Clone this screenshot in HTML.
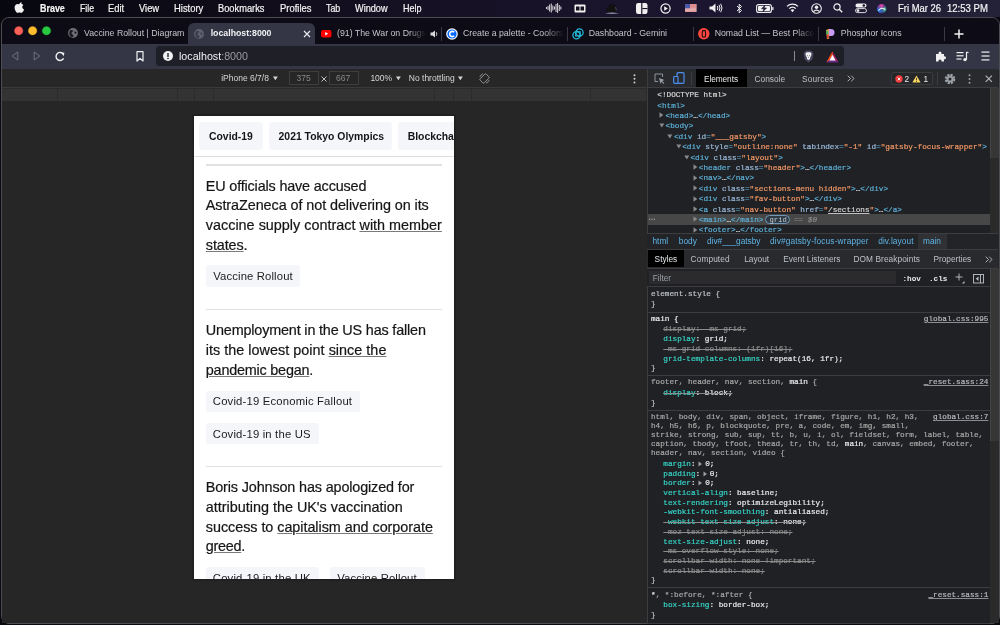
<!DOCTYPE html>
<html><head><meta charset="utf-8">
<style>
*{box-sizing:border-box;margin:0;padding:0}
html,body{width:1000px;height:625px;overflow:hidden;background:#0a0810;font-family:"Liberation Sans",sans-serif;position:relative}
.a{position:absolute;white-space:nowrap}
.mo{-webkit-text-stroke:0.2px currentColor}
svg.a{overflow:visible}
</style></head><body>
<div id="root" style="position:absolute;left:0;top:0;width:1000px;height:625px;will-change:transform">
<div class="a" style="left:0px;top:0px;width:1000px;height:625px;background:#0b0910;"></div>
<div class="a" style="left:0px;top:0px;width:1000px;height:17px;background:linear-gradient(90deg,#07070f 0%,#0f0c18 22%,#171125 45%,#1b1530 70%,#232238 100%);"></div>
<svg class="a" style="left:15px;top:1.8px;" width="11" height="12" viewBox="0 0 11 12"><g transform="scale(0.88 0.92)"><path d="M7.6 0.3c.1 1-.3 1.9-.9 2.5-.6.6-1.4 1-2.2.9-.1-.9.3-1.8.9-2.4C6 .7 6.9.3 7.6.3zM10.3 8.4c-.3.7-.5 1-.9 1.6-.6.8-1.3 1.8-2.2 1.8-.8 0-1-.5-2.1-.5s-1.3.5-2.1.5C2.1 11.8 1.4 10.9.8 10 -.8 7.6-.9 4.8.6 3.3c.6-.7 1.5-1.1 2.3-1.1.9 0 1.4.5 2.2.5.7 0 1.1-.5 2.2-.5.8 0 1.6.4 2.2 1.1-1.9 1-1.6 3.8.8 5.1z" fill="#f2f2f2"/></g></svg>
<div class="a" style="left:40.00px;top:4.00px;font-size:10.4px;line-height:10.4px;color:#f4f4f4;font-weight:bold;font-family:'Liberation Sans',sans-serif;transform:scaleX(0.859);transform-origin:0 0;-webkit-text-stroke:0.2px #f4f4f4">Brave</div>
<div class="a" style="left:79.50px;top:4.00px;font-size:10.4px;line-height:10.4px;color:#f4f4f4;font-weight:normal;font-family:'Liberation Sans',sans-serif;transform:scaleX(0.840);transform-origin:0 0;-webkit-text-stroke:0.2px #f4f4f4">File</div>
<div class="a" style="left:108.30px;top:4.00px;font-size:10.4px;line-height:10.4px;color:#f4f4f4;font-weight:normal;font-family:'Liberation Sans',sans-serif;transform:scaleX(0.902);transform-origin:0 0;-webkit-text-stroke:0.2px #f4f4f4">Edit</div>
<div class="a" style="left:138.80px;top:4.00px;font-size:10.4px;line-height:10.4px;color:#f4f4f4;font-weight:normal;font-family:'Liberation Sans',sans-serif;transform:scaleX(0.898);transform-origin:0 0;-webkit-text-stroke:0.2px #f4f4f4">View</div>
<div class="a" style="left:173.80px;top:4.00px;font-size:10.4px;line-height:10.4px;color:#f4f4f4;font-weight:normal;font-family:'Liberation Sans',sans-serif;transform:scaleX(0.905);transform-origin:0 0;-webkit-text-stroke:0.2px #f4f4f4">History</div>
<div class="a" style="left:218.30px;top:4.00px;font-size:10.4px;line-height:10.4px;color:#f4f4f4;font-weight:normal;font-family:'Liberation Sans',sans-serif;transform:scaleX(0.893);transform-origin:0 0;-webkit-text-stroke:0.2px #f4f4f4">Bookmarks</div>
<div class="a" style="left:279.50px;top:4.00px;font-size:10.4px;line-height:10.4px;color:#f4f4f4;font-weight:normal;font-family:'Liberation Sans',sans-serif;transform:scaleX(0.907);transform-origin:0 0;-webkit-text-stroke:0.2px #f4f4f4">Profiles</div>
<div class="a" style="left:325.50px;top:4.00px;font-size:10.4px;line-height:10.4px;color:#f4f4f4;font-weight:normal;font-family:'Liberation Sans',sans-serif;transform:scaleX(0.854);transform-origin:0 0;-webkit-text-stroke:0.2px #f4f4f4">Tab</div>
<div class="a" style="left:354.50px;top:4.00px;font-size:10.4px;line-height:10.4px;color:#f4f4f4;font-weight:normal;font-family:'Liberation Sans',sans-serif;transform:scaleX(0.881);transform-origin:0 0;-webkit-text-stroke:0.2px #f4f4f4">Window</div>
<div class="a" style="left:402.50px;top:4.00px;font-size:10.4px;line-height:10.4px;color:#f4f4f4;font-weight:normal;font-family:'Liberation Sans',sans-serif;transform:scaleX(0.868);transform-origin:0 0;-webkit-text-stroke:0.2px #f4f4f4">Help</div>
<div class="a" style="left:898.00px;top:4.00px;font-size:10.4px;line-height:10.4px;color:#f4f4f4;font-weight:normal;font-family:'Liberation Sans',sans-serif;transform:scaleX(0.909);transform-origin:0 0;-webkit-text-stroke:0.2px #f4f4f4">Fri Mar 26</div>
<div class="a" style="left:946.80px;top:4.00px;font-size:10.4px;line-height:10.4px;color:#f4f4f4;font-weight:normal;font-family:'Liberation Sans',sans-serif;transform:scaleX(0.919);transform-origin:0 0;-webkit-text-stroke:0.2px #f4f4f4">12:53 PM</div>
<svg class="a" style="left:546px;top:3px;" width="16" height="10" viewBox="0 0 16 10"><rect x="0.0" y="4.0" width="0.9" height="2" fill="#f0f0f0"/><rect x="1.6" y="3.0" width="0.9" height="4" fill="#f0f0f0"/><rect x="3.2" y="1.5" width="0.9" height="7" fill="#f0f0f0"/><rect x="4.8" y="0.5" width="0.9" height="9" fill="#f0f0f0"/><rect x="6.4" y="2.5" width="0.9" height="5" fill="#f0f0f0"/><rect x="8.0" y="3.5" width="0.9" height="3" fill="#f0f0f0"/><rect x="9.6" y="1.0" width="0.9" height="8" fill="#f0f0f0"/><rect x="11.2" y="0.0" width="0.9" height="10" fill="#f0f0f0"/><rect x="12.8" y="2.0" width="0.9" height="6" fill="#f0f0f0"/><rect x="14.4" y="3.5" width="0.9" height="3" fill="#f0f0f0"/></svg>
<svg class="a" style="left:574px;top:4px;" width="12" height="9" viewBox="0 0 12 9"><rect x="0.5" y="0.5" width="11" height="8" rx="1" fill="#f0f0f0"/><rect x="2" y="2.5" width="3.5" height="4" fill="#15101f"/><rect x="6.5" y="2.5" width="3.5" height="4" fill="#15101f"/></svg>
<svg class="a" style="left:604px;top:3px;" width="16" height="12" viewBox="0 0 16 12"><path d="M2.5 9.3 Q2.5 1 8 1 Q12.3 1 12.8 9.3z" fill="#121212"/><path d="M1 10.3 Q8 8.6 15 10.3 Q8 11.6 1 10.3z" fill="#8d8aa3"/><path d="M11.5 4 Q12.2 6 12.3 7.5" stroke="#6f6b85" stroke-width="0.6" fill="none"/></svg>
<svg class="a" style="left:636px;top:3px;" width="12" height="11" viewBox="0 0 12 11"><rect x="0" y="0" width="11.5" height="11" rx="2.2" fill="#f0f0f0"/><rect x="5.2" y="0" width="1.2" height="11" fill="#171125"/><rect x="6.4" y="5" width="5.1" height="1.1" fill="#171125"/></svg>
<svg class="a" style="left:660px;top:3px;" width="11" height="11" viewBox="0 0 11 11"><circle cx="5.5" cy="5.5" r="4.6" fill="none" stroke="#f0f0f0" stroke-width="1.2"/><path d="M4.2 3.3 L7.9 5.5 L4.2 7.7z" fill="#f0f0f0"/></svg>
<svg class="a" style="left:684.5px;top:4px;" width="11.5" height="8" viewBox="0 0 11.5 8"><rect width="11.5" height="8" fill="#e8e8ec"/><rect y="0.00" width="11.5" height="0.58" fill="#d94a4a"/><rect y="1.15" width="11.5" height="0.58" fill="#d94a4a"/><rect y="2.30" width="11.5" height="0.58" fill="#d94a4a"/><rect y="3.45" width="11.5" height="0.58" fill="#d94a4a"/><rect y="4.60" width="11.5" height="0.58" fill="#d94a4a"/><rect y="5.75" width="11.5" height="0.58" fill="#d94a4a"/><rect y="6.90" width="11.5" height="0.58" fill="#d94a4a"/><rect width="5" height="4.3" fill="#4a5aa8"/></svg>
<svg class="a" style="left:709px;top:3px;" width="14" height="10" viewBox="0 0 14 10"><path d="M0.5 3.5 H3 L6.5 0.5 V9.5 L3 6.5 H0.5z" fill="#f0f0f0"/><path d="M8.3 3 Q9.5 5 8.3 7" stroke="#f0f0f0" stroke-width="1" fill="none"/><path d="M10 1.8 Q12 5 10 8.2" stroke="#f0f0f0" stroke-width="1" fill="none"/><path d="M11.7 0.8 Q14.3 5 11.7 9.2" stroke="#f0f0f0" stroke-width="1" fill="none"/></svg>
<svg class="a" style="left:736px;top:3px;" width="7" height="11" viewBox="0 0 7 11"><path d="M1 3 L5.5 7.5 L3.2 9.8 V1.2 L5.5 3.5 L1 8" stroke="#f0f0f0" stroke-width="1" fill="none"/></svg>
<svg class="a" style="left:756px;top:4px;" width="18" height="9" viewBox="0 0 18 9"><rect x="0.6" y="0.6" width="14.8" height="7.8" rx="2" fill="none" stroke="#f0f0f0" stroke-width="1.1"/><rect x="2" y="2" width="12" height="5" rx="0.8" fill="#f0f0f0"/><rect x="16.2" y="3" width="1.3" height="3" rx="0.5" fill="#f0f0f0"/><path d="M9 1.2 L5.5 4.8 H8 L6.8 7.8 L10.5 4 H8z" fill="#1b1630" stroke="#1b1630" stroke-width="0.6"/></svg>
<svg class="a" style="left:786px;top:3px;" width="13" height="10" viewBox="0 0 13 10"><path d="M6.5 9.3 L4.6 7.1 A2.8 2.8 0 0 1 8.4 7.1z" fill="#f0f0f0"/><path d="M3.2 5.6 A4.7 4.7 0 0 1 9.8 5.6" stroke="#f0f0f0" stroke-width="1.3" fill="none"/><path d="M1 3.4 A7.8 7.8 0 0 1 12 3.4" stroke="#f0f0f0" stroke-width="1.3" fill="none"/></svg>
<svg class="a" style="left:810.5px;top:2.5px;" width="11" height="11" viewBox="0 0 11 11"><circle cx="5.5" cy="5.5" r="4.8" fill="none" stroke="#f0f0f0" stroke-width="1.1"/><circle cx="5.5" cy="4.3" r="1.7" fill="#f0f0f0"/><path d="M2.5 8.5 Q5.5 5.8 8.5 8.5" stroke="#f0f0f0" stroke-width="1.3" fill="none"/></svg>
<svg class="a" style="left:833px;top:3px;" width="10" height="10" viewBox="0 0 10 10"><circle cx="4" cy="4" r="3.1" fill="none" stroke="#f0f0f0" stroke-width="1.2"/><path d="M6.3 6.3 L9.2 9.2" stroke="#f0f0f0" stroke-width="1.4"/></svg>
<svg class="a" style="left:854.5px;top:3px;" width="12" height="10" viewBox="0 0 12 10"><rect x="0.5" y="0.5" width="11" height="4" rx="2" fill="#f0f0f0"/><circle cx="8.8" cy="2.5" r="1.3" fill="#1b1630"/><rect x="0.5" y="5.6" width="11" height="4" rx="2" fill="none" stroke="#f0f0f0" stroke-width="0.9"/><circle cx="3" cy="7.6" r="1.3" fill="#f0f0f0"/></svg>
<svg class="a" style="left:877px;top:3.6px;" width="10" height="10" viewBox="0 0 10 10"><defs><radialGradient id="s1" cx="0.45" cy="0.2" r="0.5"><stop offset="0" stop-color="#f04aa8"/><stop offset="1" stop-color="#f04aa8" stop-opacity="0"/></radialGradient><radialGradient id="s2" cx="0.2" cy="0.7" r="0.5"><stop offset="0" stop-color="#2f8af5"/><stop offset="1" stop-color="#2f8af5" stop-opacity="0"/></radialGradient><radialGradient id="s3" cx="0.85" cy="0.6" r="0.45"><stop offset="0" stop-color="#3ec99a"/><stop offset="1" stop-color="#3ec99a" stop-opacity="0"/></radialGradient></defs><circle cx="4.7" cy="4.7" r="4.7" fill="#3a2a7a"/><circle cx="4.7" cy="4.7" r="4.7" fill="url(#s1)"/><circle cx="4.7" cy="4.7" r="4.7" fill="url(#s2)"/><circle cx="4.7" cy="4.7" r="4.7" fill="url(#s3)"/><path d="M1.5 6.5 Q4 3.8 5 4.2 Q6.5 4.2 8 5.5" stroke="#fff" stroke-width="1.1" fill="none" opacity="0.9"/></svg>
<div class="a" style="left:0.5px;top:17.1px;width:999px;height:606.6px;border-radius:8px;background:#252525;border:1px solid #4d4c53;overflow:hidden"><div style="position:absolute;left:0;top:0;width:999px;height:26px;background:#0d0c16"></div><div style="position:absolute;left:0;top:26px;width:999px;height:26px;background:#343646"></div></div>
<svg class="a" style="left:14px;top:26px;" width="38" height="10" viewBox="0 0 38 10"><circle cx="4.7" cy="4.7" r="4.3" fill="#fe5f57" stroke="#d2443c" stroke-width="0.3"/><circle cx="18.6" cy="4.7" r="4.3" fill="#febc2e" stroke="#d79b20" stroke-width="0.3"/><circle cx="32.5" cy="4.7" r="4.3" fill="#28c840" stroke="#1aa22c" stroke-width="0.3"/></svg>
<svg class="a" style="left:67.9px;top:28.299999999999997px;" width="10" height="10" viewBox="0 0 10 10"><circle cx="5" cy="5" r="4.9" fill="#6f6f76"/><path d="M2.2 2.3 Q4 1.6 5.3 2.8 Q4.6 4.2 3.6 4.4 Q3.2 5.5 4.3 6.2 Q5.5 6.8 5.6 8.5 Q4.3 9.6 3 9 Q1.5 7.5 1.2 5.5 Q1.2 3.5 2.2 2.3z" fill="#0c0b15" opacity="0.85"/><path d="M6.3 3.6 Q7.8 3.4 8.6 4.6 Q8.3 6 7.1 6 Q6.2 5 6.3 3.6z" fill="#0c0b15" opacity="0.85"/></svg>
<div class="a" style="left:84.00px;top:29.00px;font-size:8.75px;line-height:8.75px;color:#c5c5cb;font-weight:normal;font-family:'Liberation Sans',sans-serif;">Vaccine Rollout | Diagram</div>
<div class="a" style="left:188px;top:23px;width:127px;height:21px;background:#343646;border-radius:6px 6px 0 0"></div>
<svg class="a" style="left:194.1px;top:28.5px;" width="10" height="10" viewBox="0 0 10 10"><circle cx="5" cy="5" r="4.9" fill="#5f616d"/><path d="M2.2 2.3 Q4 1.6 5.3 2.8 Q4.6 4.2 3.6 4.4 Q3.2 5.5 4.3 6.2 Q5.5 6.8 5.6 8.5 Q4.3 9.6 3 9 Q1.5 7.5 1.2 5.5 Q1.2 3.5 2.2 2.3z" fill="#343646" opacity="0.85"/><path d="M6.3 3.6 Q7.8 3.4 8.6 4.6 Q8.3 6 7.1 6 Q6.2 5 6.3 3.6z" fill="#343646" opacity="0.85"/></svg>
<div class="a" style="left:210.70px;top:29.00px;font-size:8.75px;line-height:8.75px;color:#f2f2f4;font-weight:bold;font-family:'Liberation Sans',sans-serif;">localhost:8000</div>
<svg class="a" style="left:302.5px;top:29.5px;" width="8" height="8" viewBox="0 0 8 8"><path d="M1 1 L7 7 M7 1 L1 7" stroke="#e8e8ec" stroke-width="1.2"/></svg>
<svg class="a" style="left:320.5px;top:30px;" width="11" height="8" viewBox="0 0 11 8"><rect width="10.5" height="7.5" rx="2" fill="#f00"/><path d="M4.2 2 L7.2 3.75 L4.2 5.5z" fill="#fff"/></svg>
<div class="a" style="left:337px;top:29.00px;width:89px;overflow:hidden;font-size:8.75px;line-height:8.75px;color:#c5c5cb;-webkit-mask-image:linear-gradient(90deg,#000 80%,transparent 100%)">(91) The War on Drugs - Harmonia's Dream</div>
<svg class="a" style="left:429.5px;top:30px;" width="9" height="8" viewBox="0 0 9 8"><path d="M0.5 2.5 H2.5 L5 0.5 V7.5 L2.5 5.5 H0.5z" fill="#d8d8dc"/><path d="M6.3 2.2 Q7.4 4 6.3 5.8" stroke="#d8d8dc" stroke-width="0.9" fill="none"/></svg>
<div class="a" style="left:441px;top:27px;width:1px;height:14px;background:#3a3944;"></div>
<svg class="a" style="left:446.3px;top:28px;" width="12" height="12" viewBox="0 0 12 12"><circle cx="6" cy="6" r="5.8" fill="#fff"/><circle cx="6" cy="6" r="4.6" fill="#0066ff"/><path d="M8.2 4.2 A2.6 2.6 0 1 0 8.2 7.8" stroke="#fff" stroke-width="1.6" fill="none"/></svg>
<div class="a" style="left:463px;top:29.00px;width:101px;overflow:hidden;font-size:8.75px;line-height:8.75px;color:#c5c5cb;-webkit-mask-image:linear-gradient(90deg,#000 80%,transparent 100%)">Create a palette - Coolors</div>
<div class="a" style="left:567px;top:27px;width:1px;height:14px;background:#3a3944;"></div>
<svg class="a" style="left:572px;top:28px;" width="12" height="12" viewBox="0 0 12 12"><circle cx="4.5" cy="7.3" r="3.6" fill="none" stroke="#25b5d6" stroke-width="1.3"/><circle cx="7.5" cy="4.5" r="3.6" fill="none" stroke="#25b5d6" stroke-width="1.3"/><rect x="3.6" y="3.7" width="4.6" height="4.3" fill="none" stroke="#25b5d6" stroke-width="1.1"/></svg>
<div class="a" style="left:588.70px;top:29.00px;font-size:8.75px;line-height:8.75px;color:#c5c5cb;font-weight:normal;font-family:'Liberation Sans',sans-serif;">Dashboard - Gemini</div>
<div class="a" style="left:692.5px;top:27px;width:1px;height:14px;background:#3a3944;"></div>
<svg class="a" style="left:697.5px;top:28px;" width="12" height="12" viewBox="0 0 12 12"><circle cx="5.8" cy="5.8" r="5.7" fill="#ff4742"/><path d="M4.5 2.6 H7.6 M4.6 2.7 Q3.6 6 4.6 9 M7.2 2.7 Q8.2 6 7.2 9 M4.3 9 H7.3" stroke="#1a0d0d" stroke-width="1.1" fill="none"/></svg>
<div class="a" style="left:714.7px;top:29.00px;width:100px;overflow:hidden;font-size:8.75px;line-height:8.75px;color:#c5c5cb;-webkit-mask-image:linear-gradient(90deg,#000 80%,transparent 100%)">Nomad List — Best Places to Live</div>
<div class="a" style="left:818.3px;top:27px;width:1px;height:14px;background:#3a3944;"></div>
<svg class="a" style="left:825px;top:28px;" width="9" height="12" viewBox="0 0 9 12"><path d="M3.5 1 H6 A3.5 3.5 0 0 1 6 8 H3.5z" fill="#c79af5"/><path d="M1 2 L4 1 L4.2 10.8 L2 11z" fill="#e8a33c"/><path d="M1.3 3 L3.2 2.4 L3.4 6 L1.6 6.8z" fill="#3bb273"/><path d="M1.8 7 L3.6 6.3 L3.8 10 L2.1 10.6z" fill="#d83a3a"/></svg>
<div class="a" style="left:840.80px;top:29.00px;font-size:8.75px;line-height:8.75px;color:#c5c5cb;font-weight:normal;font-family:'Liberation Sans',sans-serif;">Phosphor Icons</div>
<div class="a" style="left:944px;top:27px;width:1px;height:14px;background:#3a3944;"></div>
<svg class="a" style="left:953.5px;top:29px;" width="10" height="10" viewBox="0 0 10 10"><path d="M5 0.5 V9.5 M0.5 5 H9.5" stroke="#f2f2f4" stroke-width="1.5"/></svg>
<svg class="a" style="left:11px;top:51px;" width="8" height="10" viewBox="0 0 8 10"><path d="M6.8 1 L1.2 5 L6.8 9z" fill="none" stroke="#6e7080" stroke-width="1"/></svg>
<svg class="a" style="left:33px;top:51px;" width="8" height="10" viewBox="0 0 8 10"><path d="M1.2 1 L6.8 5 L1.2 9z" fill="none" stroke="#6e7080" stroke-width="1"/></svg>
<svg class="a" style="left:54px;top:51px;" width="12" height="11" viewBox="0 0 12 11"><path d="M9.4 3.2 A4 4 0 1 0 9.6 7.3" stroke="#f0f0f2" stroke-width="1.4" fill="none"/><path d="M7 1.2 L10.4 1.8 L9.7 5.2z" fill="#f0f0f2"/></svg>
<svg class="a" style="left:136px;top:51px;" width="8" height="11" viewBox="0 0 8 11"><path d="M1 0.7 H7 V10 L4 7.4 L1 10z" fill="none" stroke="#f0f0f2" stroke-width="1.2" stroke-linejoin="round"/></svg>
<div class="a" style="left:155.5px;top:46px;width:688.5px;height:20px;background:#1e1f27;border-radius:3.5px"></div>
<svg class="a" style="left:163px;top:51px;" width="10" height="10" viewBox="0 0 10 10"><circle cx="5" cy="5" r="5" fill="#f0f0f2"/><rect x="4.3" y="2" width="1.4" height="4" rx="0.5" fill="#1e1f27"/><circle cx="5" cy="7.5" r="0.8" fill="#1e1f27"/></svg>
<div class="a" style="left:179.00px;top:51.00px;font-size:10.7px;line-height:10.7px;color:#f2f2f4;font-weight:normal;font-family:'Liberation Sans',sans-serif;">localhost<span style="color:#9a9ba5">:8000</span></div>
<div class="a" style="left:794px;top:51px;width:1px;height:10px;background:#8a8b95;"></div>
<svg class="a" style="left:803px;top:50px;" width="11" height="13" viewBox="0 0 11 13"><path d="M1.5 1.8 L3.5 0.4 H7.5 L9.5 1.8 L10.4 3.5 L9.3 9.2 L5.5 12.4 L1.7 9.2 L0.6 3.5z" fill="#4a4760"/><path d="M2.6 3 L4 2.2 H7 L8.4 3 L8.3 5.5 L7.2 7.3 L7 9 L5.5 10 L4 9 L3.8 7.3 L2.7 5.5z" fill="#f4f4f6"/><path d="M4.2 5.2 L5 6.2 M6.8 5.2 L6 6.2 M5.5 7.4 V8.2" stroke="#4a4760" stroke-width="0.7"/></svg>
<svg class="a" style="left:825.5px;top:50.5px;" width="13" height="12" viewBox="0 0 13 12"><path d="M6.5 0.6 L12.6 11.3 H0.4z" fill="#9e1f63"/><path d="M6.5 0.6 L0.4 11.3 L3 9.5 L6.5 3.5z" fill="#ff5000"/><path d="M0.4 11.3 H12.6 L10.2 9.6 H2.8z" fill="#662d91"/><path d="M6.5 3.8 L9.6 9.5 H3.4z" fill="#fff"/></svg>
<svg class="a" style="left:935px;top:51px;" width="11" height="11" viewBox="0 0 11 11"><path d="M1 3 H3.5 Q3.2 0.5 5 0.5 Q6.8 0.5 6.5 3 H9 V5.3 Q11 5 11 6.8 Q11 8.6 9 8.3 V10.5 H6.5 Q6.8 8.5 5 8.5 Q3.2 8.5 3.5 10.5 H1z" fill="#f0f0f2"/></svg>
<svg class="a" style="left:956px;top:51px;" width="13" height="11" viewBox="0 0 13 11"><rect x="0.5" y="1" width="7" height="1.2" fill="#f0f0f2"/><rect x="0.5" y="4.2" width="7" height="1.2" fill="#f0f0f2"/><rect x="0.5" y="7.4" width="5" height="1.2" fill="#f0f0f2"/><path d="M10.5 1 V8.5" stroke="#f0f0f2" stroke-width="1.2"/><circle cx="9" cy="8.6" r="1.7" fill="#f0f0f2"/><path d="M10.5 1 L12.5 1.8" stroke="#f0f0f2" stroke-width="1.2"/></svg>
<svg class="a" style="left:981px;top:51px;" width="9" height="11" viewBox="0 0 9 11"><rect x="0.5" y="0.5" width="8" height="1.2" fill="#f0f0f2"/><rect x="0.5" y="4.4" width="8" height="1.2" fill="#f0f0f2"/><rect x="0.5" y="8.3" width="8" height="1.2" fill="#f0f0f2"/></svg>
<div class="a" style="left:2px;top:69px;width:645px;height:18px;background:#272727;"></div>
<div class="a" style="left:2px;top:87px;width:645px;height:1px;background:#3a3a3a;"></div>
<div class="a" style="left:2px;top:88px;width:645px;height:13px;background:#2b2b2b;"></div>
<div class="a" style="left:2px;top:89px;width:55px;height:12px;background:#333333;"></div>
<div class="a" style="left:57.5px;top:89px;width:119.0px;height:12px;background:#333333;"></div>
<div class="a" style="left:177.5px;top:89px;width:16.5px;height:12px;background:#333333;"></div>
<div class="a" style="left:195px;top:89px;width:18px;height:12px;background:#333333;"></div>
<div class="a" style="left:214px;top:89px;width:219.5px;height:12px;background:#333333;"></div>
<div class="a" style="left:434.5px;top:89px;width:18.0px;height:12px;background:#333333;"></div>
<div class="a" style="left:453.5px;top:89px;width:17.0px;height:12px;background:#333333;"></div>
<div class="a" style="left:471.5px;top:89px;width:118.0px;height:12px;background:#333333;"></div>
<div class="a" style="left:590.5px;top:89px;width:55.5px;height:12px;background:#333333;"></div>
<div class="a" style="left:2px;top:101px;width:645px;height:522px;background:#262626;"></div>
<div class="a" style="left:221.20px;top:74.00px;font-size:8.5px;line-height:8.5px;color:#d6d6d6;font-weight:normal;font-family:'Liberation Sans',sans-serif;">iPhone 6/7/8</div>
<svg class="a" style="left:272.5px;top:75.5px;" width="5" height="5" viewBox="0 0 5 5"><path d="M0 0.5 H4.8 L2.4 4.2z" fill="#d6d6d6"/></svg>
<div class="a" style="left:289px;top:71.3px;width:30px;height:14px;border:1px solid #3e3e3e;background:#262626"></div>
<div class="a" style="left:296.50px;top:74.00px;font-size:8.5px;line-height:8.5px;color:#8a8a8a;font-weight:normal;font-family:'Liberation Sans',sans-serif;">375</div>
<svg class="a" style="left:320.5px;top:76px;" width="6" height="6" viewBox="0 0 6 6"><path d="M0.5 0.5 L5.5 5.5 M5.5 0.5 L0.5 5.5" stroke="#cfcfcf" stroke-width="0.9"/></svg>
<div class="a" style="left:328.5px;top:71.3px;width:30px;height:14px;border:1px solid #3e3e3e;background:#262626"></div>
<div class="a" style="left:336.00px;top:74.00px;font-size:8.5px;line-height:8.5px;color:#8a8a8a;font-weight:normal;font-family:'Liberation Sans',sans-serif;">667</div>
<div class="a" style="left:370.40px;top:74.00px;font-size:8.5px;line-height:8.5px;color:#d6d6d6;font-weight:normal;font-family:'Liberation Sans',sans-serif;">100%</div>
<svg class="a" style="left:396.3px;top:75.5px;" width="5" height="5" viewBox="0 0 5 5"><path d="M0 0.5 H4.8 L2.4 4.2z" fill="#d6d6d6"/></svg>
<div class="a" style="left:408.80px;top:74.00px;font-size:8.5px;line-height:8.5px;color:#d6d6d6;font-weight:normal;font-family:'Liberation Sans',sans-serif;">No throttling</div>
<svg class="a" style="left:458.3px;top:75.5px;" width="5" height="5" viewBox="0 0 5 5"><path d="M0 0.5 H4.8 L2.4 4.2z" fill="#d6d6d6"/></svg>
<svg class="a" style="left:479px;top:73px;" width="11" height="11" viewBox="0 0 11 11"><rect x="2.6" y="1.2" width="5.8" height="8.6" rx="1" transform="rotate(45 5.5 5.5)" fill="none" stroke="#9a9a9a" stroke-width="0.9"/><path d="M0.8 4 A5 5 0 0 1 4 0.8 M10.2 7 A5 5 0 0 1 7 10.2" stroke="#9a9a9a" stroke-width="0.8" fill="none"/></svg>
<svg class="a" style="left:632.5px;top:74px;" width="3" height="10" viewBox="0 0 3 10"><circle cx="1.5" cy="1.2" r="1" fill="#cfcfcf"/><circle cx="1.5" cy="4.8" r="1" fill="#cfcfcf"/><circle cx="1.5" cy="8.4" r="1" fill="#cfcfcf"/></svg>
<div class="a" style="left:194px;top:116px;width:260px;height:463px;background:#fff;box-shadow:0 0 2px 1px rgba(0,0,0,0.3);overflow:hidden">
<div class="a" style="left:5.40px;top:5.80px;width:63.3px;height:28.7px;background:#f5f6fa;border-radius:3px"></div>
<div class="a" style="left:15.00px;top:16.00px;font-size:10.4px;line-height:10.4px;color:#151515;font-weight:bold;">Covid-19</div>
<div class="a" style="left:75.00px;top:5.80px;width:122.7px;height:28.7px;background:#f5f6fa;border-radius:3px"></div>
<div class="a" style="left:84.60px;top:16.00px;font-size:10.4px;line-height:10.4px;color:#151515;font-weight:bold;">2021 Tokyo Olympics</div>
<div class="a" style="left:204.00px;top:5.80px;width:90px;height:28.7px;background:#f5f6fa;border-radius:3px"></div>
<div class="a" style="left:213.70px;top:16.00px;font-size:10.4px;line-height:10.4px;color:#151515;font-weight:bold;">Blockchain</div>
<div class="a" style="left:0.00px;top:40.00px;width:260px;height:1px;background:#dedede;"></div>
<div class="a" style="left:11.70px;top:48.25px;width:236.5px;height:1.5px;background:#e1e1e1;"></div>
<div class="a" style="left:11.80px;top:63.00px;font-size:14.4px;line-height:14.4px;color:#151515;font-weight:normal;letter-spacing:-0.163px;-webkit-text-stroke:0.2px #151515">EU officials have accused</div>
<div class="a" style="left:11.80px;top:82.00px;font-size:14.4px;line-height:14.4px;color:#151515;font-weight:normal;letter-spacing:-0.074px;-webkit-text-stroke:0.2px #151515">AstraZeneca of not delivering on its</div>
<div class="a" style="left:11.80px;top:102.00px;font-size:14.4px;line-height:14.4px;color:#151515;font-weight:normal;letter-spacing:0.005px;-webkit-text-stroke:0.2px #151515">vaccine supply contract <span style="text-decoration:underline;text-decoration-color:#7a7a7a;text-underline-offset:0.5px;text-decoration-thickness:1px">with member</span></div>
<div class="a" style="left:11.80px;top:122.00px;font-size:14.4px;line-height:14.4px;color:#151515;font-weight:normal;letter-spacing:-0.099px;-webkit-text-stroke:0.2px #151515"><span style="text-decoration:underline;text-decoration-color:#7a7a7a;text-underline-offset:0.5px;text-decoration-thickness:1px">states</span>.</div>
<div class="a" style="left:12.00px;top:149.40px;width:94.30000000000001px;height:21.2px;background:#f5f6fa;border-radius:2.5px"></div>
<div class="a" style="left:19.30px;top:155.00px;font-size:11.3px;line-height:11.3px;color:#1c1c1c;font-weight:normal;letter-spacing:0.125px">Vaccine Rollout</div>
<div class="a" style="left:11.70px;top:192.85px;width:236.5px;height:1.5px;background:#e1e1e1;"></div>
<div class="a" style="left:11.80px;top:207.00px;font-size:14.4px;line-height:14.4px;color:#151515;font-weight:normal;letter-spacing:-0.171px;-webkit-text-stroke:0.2px #151515">Unemployment in the US has fallen</div>
<div class="a" style="left:11.80px;top:227.00px;font-size:14.4px;line-height:14.4px;color:#151515;font-weight:normal;letter-spacing:0.021px;-webkit-text-stroke:0.2px #151515">its the lowest point <span style="text-decoration:underline;text-decoration-color:#7a7a7a;text-underline-offset:0.5px;text-decoration-thickness:1px">since the</span></div>
<div class="a" style="left:11.80px;top:247.00px;font-size:14.4px;line-height:14.4px;color:#151515;font-weight:normal;letter-spacing:-0.208px;-webkit-text-stroke:0.2px #151515"><span style="text-decoration:underline;text-decoration-color:#7a7a7a;text-underline-offset:0.5px;text-decoration-thickness:1px">pandemic began</span>.</div>
<div class="a" style="left:11.50px;top:274.60px;width:154.8px;height:21.2px;background:#f5f6fa;border-radius:2.5px"></div>
<div class="a" style="left:18.80px;top:280.00px;font-size:11.3px;line-height:11.3px;color:#1c1c1c;font-weight:normal;letter-spacing:0.175px">Covid-19 Economic Fallout</div>
<div class="a" style="left:11.50px;top:306.80px;width:113.10000000000002px;height:21.2px;background:#f5f6fa;border-radius:2.5px"></div>
<div class="a" style="left:18.80px;top:313.00px;font-size:11.3px;line-height:11.3px;color:#1c1c1c;font-weight:normal;letter-spacing:0.170px">Covid-19 in the US</div>
<div class="a" style="left:11.70px;top:349.85px;width:236.5px;height:1.5px;background:#e1e1e1;"></div>
<div class="a" style="left:11.80px;top:364.00px;font-size:14.4px;line-height:14.4px;color:#151515;font-weight:normal;letter-spacing:-0.139px;-webkit-text-stroke:0.2px #151515">Boris Johnson has apologized for</div>
<div class="a" style="left:11.80px;top:384.00px;font-size:14.4px;line-height:14.4px;color:#151515;font-weight:normal;letter-spacing:-0.007px;-webkit-text-stroke:0.2px #151515">attributing the UK's vaccination</div>
<div class="a" style="left:11.80px;top:404.00px;font-size:14.4px;line-height:14.4px;color:#151515;font-weight:normal;letter-spacing:-0.049px;-webkit-text-stroke:0.2px #151515">success to <span style="text-decoration:underline;text-decoration-color:#7a7a7a;text-underline-offset:0.5px;text-decoration-thickness:1px">capitalism and corporate</span></div>
<div class="a" style="left:11.80px;top:423.00px;font-size:14.4px;line-height:14.4px;color:#151515;font-weight:normal;letter-spacing:-0.281px;-webkit-text-stroke:0.2px #151515"><span style="text-decoration:underline;text-decoration-color:#7a7a7a;text-underline-offset:0.5px;text-decoration-thickness:1px">greed</span>.</div>
<div class="a" style="left:11.50px;top:451.40px;width:113.10000000000002px;height:21.2px;background:#f5f6fa;border-radius:2.5px"></div>
<div class="a" style="left:18.80px;top:457.00px;font-size:11.3px;line-height:11.3px;color:#1c1c1c;font-weight:normal;letter-spacing:0.170px">Covid-19 in the UK</div>
<div class="a" style="left:135.90px;top:451.40px;width:95.10000000000002px;height:21.2px;background:#f5f6fa;border-radius:2.5px"></div>
<div class="a" style="left:143.20px;top:457.00px;font-size:11.3px;line-height:11.3px;color:#1c1c1c;font-weight:normal;letter-spacing:0.125px">Vaccine Rollout</div>
</div>
<div class="a" style="left:647px;top:69px;width:351px;height:554px;background:#202124;"></div>
<div class="a" style="left:647px;top:69px;width:351px;height:18.5px;background:#292a2d;"></div>
<div class="a" style="left:647px;top:87.2px;width:351px;height:0.8px;background:#3d3d40;"></div>
<div class="a" style="left:646.5px;top:69px;width:1px;height:554px;background:#3d3d40;"></div>
<svg class="a" style="left:654px;top:73px;" width="11" height="11" viewBox="0 0 11 11"><path d="M8.5 4 V1 H1 V8.5 H4" fill="none" stroke="#9aa0a6" stroke-width="0.9"/><path d="M5 5 L10.5 7 L8.2 8 L10.3 10.2 L9.6 10.9 L7.5 8.8 L6.6 10.9z" fill="#9aa0a6"/></svg>
<svg class="a" style="left:672.5px;top:72px;" width="12" height="12" viewBox="0 0 12 12"><rect x="4" y="0.7" width="7" height="10.6" rx="1" fill="none" stroke="#4b8ef1" stroke-width="1.2"/><rect x="0.7" y="4.5" width="4.3" height="6.8" rx="0.8" fill="#292a2d" stroke="#4b8ef1" stroke-width="1.2"/></svg>
<div class="a" style="left:691.3px;top:71.5px;width:0.8px;height:13px;background:#3d3d40;"></div>
<div class="a" style="left:696px;top:69.2px;width:50.6px;height:17.8px;background:#000;"></div>
<div class="a" style="left:704.00px;top:75.00px;font-size:8.3px;line-height:8.3px;color:#e8eaed;font-weight:normal;font-family:'Liberation Sans',sans-serif;letter-spacing:-0.08px;">Elements</div>
<div class="a" style="left:754.60px;top:75.00px;font-size:8.3px;line-height:8.3px;color:#bdc1c6;font-weight:normal;font-family:'Liberation Sans',sans-serif;">Console</div>
<div class="a" style="left:802.00px;top:75.00px;font-size:8.3px;line-height:8.3px;color:#bdc1c6;font-weight:normal;font-family:'Liberation Sans',sans-serif;letter-spacing:0.17px;">Sources</div>
<svg class="a" style="left:846.5px;top:75px;" width="8" height="7" viewBox="0 0 8 7"><path d="M0.7 0.7 L3.5 3.5 L0.7 6.3 M4.2 0.7 L7 3.5 L4.2 6.3" stroke="#bdc1c6" stroke-width="0.9" fill="none"/></svg>
<div class="a" style="left:890.6px;top:72.2px;width:42.2px;height:12.4px;border:0.8px solid #3a3b3e;background:#262729;border-radius:2px"></div>
<svg class="a" style="left:894.8px;top:74.5px;" width="8" height="8" viewBox="0 0 8 8"><circle cx="4" cy="4" r="3.7" fill="#ee3b3b"/><path d="M2.6 2.6 L5.4 5.4 M5.4 2.6 L2.6 5.4" stroke="#fff" stroke-width="0.9"/></svg>
<div class="a" style="left:904.60px;top:75.00px;font-size:8.3px;line-height:8.3px;color:#e8eaed;font-weight:normal;font-family:'Liberation Sans',sans-serif;">2</div>
<svg class="a" style="left:912px;top:74.5px;" width="9" height="8" viewBox="0 0 9 8"><path d="M4.5 0.4 L8.6 7.6 H0.4z" fill="#fdd663"/><rect x="4.1" y="2.8" width="0.8" height="2.6" fill="#202124"/><rect x="4.1" y="6" width="0.8" height="0.8" fill="#202124"/></svg>
<div class="a" style="left:923.50px;top:75.00px;font-size:8.3px;line-height:8.3px;color:#e8eaed;font-weight:normal;font-family:'Liberation Sans',sans-serif;">1</div>
<div class="a" style="left:937px;top:72px;width:0.8px;height:13px;background:#3d3d40;"></div>
<svg class="a" style="left:944.3px;top:72.5px;" width="12" height="12" viewBox="0 0 12 12"><circle cx="6" cy="6" r="4" fill="none" stroke="#9aa0a6" stroke-width="2.6" stroke-dasharray="2.1 1.04"/><circle cx="6" cy="6" r="3.5" fill="#9aa0a6"/><circle cx="6" cy="6" r="1.5" fill="#292a2d"/></svg>
<svg class="a" style="left:968px;top:73.5px;" width="3" height="10" viewBox="0 0 3 10"><circle cx="1.5" cy="1.3" r="1" fill="#9aa0a6"/><circle cx="1.5" cy="5" r="1" fill="#9aa0a6"/><circle cx="1.5" cy="8.7" r="1" fill="#9aa0a6"/></svg>
<svg class="a" style="left:985px;top:74.8px;" width="8" height="8" viewBox="0 0 8 8"><path d="M0.7 0.7 L6.9 6.9 M6.9 0.7 L0.7 6.9" stroke="#b0b4b8" stroke-width="1.2"/></svg>
<div class="a" style="left:648px;top:214.2px;width:343px;height:10.8px;background:#474747;"></div>
<div class="a" style="left:648.80px;top:216.48px;font-size:7.7px;line-height:7.7px;color:#9a9a9a;font-weight:normal;font-family:'Liberation Sans',sans-serif;font-size:5px;letter-spacing:0.6px">•••</div>
<div class="a mo" style="left:657.30px;top:92.00px;font-size:7.7px;line-height:7.7px;color:#d5d5d5;font-weight:normal;font-family:'Liberation Mono',monospace;">&lt;!DOCTYPE html&gt;</div>
<div class="a mo" style="left:657.30px;top:103.00px;font-size:7.7px;line-height:7.7px;color:#d5d5d5;font-weight:normal;font-family:'Liberation Mono',monospace;"><span style="color:#5db0d7">&lt;html&gt;</span></div>
<svg class="a" style="left:659.3px;top:112.39999999999999px;" width="5" height="6" viewBox="0 0 5 6"><path d="M0.5 0.3 L4.3 3 L0.5 5.7z" fill="#8a8a8a"/></svg>
<div class="a mo" style="left:665.60px;top:113.00px;font-size:7.7px;line-height:7.7px;color:#d5d5d5;font-weight:normal;font-family:'Liberation Mono',monospace;"><span style="color:#5db0d7">&lt;head&gt;</span><span style="color:#e8eaed">…</span><span style="color:#5db0d7">&lt;/head&gt;</span></div>
<svg class="a" style="left:659.0px;top:123.30000000000001px;" width="6" height="5" viewBox="0 0 6 5"><path d="M0.3 0.5 L5.3 0.5 L2.8 4.5z" fill="#8a8a8a"/></svg>
<div class="a mo" style="left:665.60px;top:123.00px;font-size:7.7px;line-height:7.7px;color:#d5d5d5;font-weight:normal;font-family:'Liberation Mono',monospace;"><span style="color:#5db0d7">&lt;body&gt;</span></div>
<svg class="a" style="left:667.3000000000001px;top:133.7px;" width="6" height="5" viewBox="0 0 6 5"><path d="M0.3 0.5 L5.3 0.5 L2.8 4.5z" fill="#8a8a8a"/></svg>
<div class="a mo" style="left:673.90px;top:134.00px;font-size:7.7px;line-height:7.7px;color:#d5d5d5;font-weight:normal;font-family:'Liberation Mono',monospace;"><span style="color:#5db0d7">&lt;div </span><span style="color:#9bbbdc">id</span><span style="color:#5db0d7">=</span><span style="color:#f29766">"___gatsby"</span><span style="color:#5db0d7">&gt;</span></div>
<svg class="a" style="left:675.6px;top:144.1px;" width="6" height="5" viewBox="0 0 6 5"><path d="M0.3 0.5 L5.3 0.5 L2.8 4.5z" fill="#8a8a8a"/></svg>
<div class="a mo" style="left:682.20px;top:144.00px;font-size:7.7px;line-height:7.7px;color:#d5d5d5;font-weight:normal;font-family:'Liberation Mono',monospace;"><span style="color:#5db0d7">&lt;div </span><span style="color:#9bbbdc">style</span><span style="color:#5db0d7">=</span><span style="color:#f29766">"outline:none"</span> <span style="color:#9bbbdc">tabindex</span><span style="color:#5db0d7">=</span><span style="color:#f29766">"-1"</span> <span style="color:#9bbbdc">id</span><span style="color:#5db0d7">=</span><span style="color:#f29766">"gatsby-focus-wrapper"</span><span style="color:#5db0d7">&gt;</span></div>
<svg class="a" style="left:683.9000000000001px;top:154.5px;" width="6" height="5" viewBox="0 0 6 5"><path d="M0.3 0.5 L5.3 0.5 L2.8 4.5z" fill="#8a8a8a"/></svg>
<div class="a mo" style="left:690.50px;top:155.00px;font-size:7.7px;line-height:7.7px;color:#d5d5d5;font-weight:normal;font-family:'Liberation Mono',monospace;"><span style="color:#5db0d7">&lt;div </span><span style="color:#9bbbdc">class</span><span style="color:#5db0d7">=</span><span style="color:#f29766">"layout"</span><span style="color:#5db0d7">&gt;</span></div>
<svg class="a" style="left:692.5px;top:164.39999999999998px;" width="5" height="6" viewBox="0 0 5 6"><path d="M0.5 0.3 L4.3 3 L0.5 5.7z" fill="#8a8a8a"/></svg>
<div class="a mo" style="left:698.80px;top:165.00px;font-size:7.7px;line-height:7.7px;color:#d5d5d5;font-weight:normal;font-family:'Liberation Mono',monospace;"><span style="color:#5db0d7">&lt;header </span><span style="color:#9bbbdc">class</span><span style="color:#5db0d7">=</span><span style="color:#f29766">"header"</span><span style="color:#5db0d7">&gt;</span><span style="color:#e8eaed">…</span><span style="color:#5db0d7">&lt;/header&gt;</span></div>
<svg class="a" style="left:692.5px;top:174.8px;" width="5" height="6" viewBox="0 0 5 6"><path d="M0.5 0.3 L4.3 3 L0.5 5.7z" fill="#8a8a8a"/></svg>
<div class="a mo" style="left:698.80px;top:175.00px;font-size:7.7px;line-height:7.7px;color:#d5d5d5;font-weight:normal;font-family:'Liberation Mono',monospace;"><span style="color:#5db0d7">&lt;nav&gt;</span><span style="color:#e8eaed">…</span><span style="color:#5db0d7">&lt;/nav&gt;</span></div>
<svg class="a" style="left:692.5px;top:185.2px;" width="5" height="6" viewBox="0 0 5 6"><path d="M0.5 0.3 L4.3 3 L0.5 5.7z" fill="#8a8a8a"/></svg>
<div class="a mo" style="left:698.80px;top:186.00px;font-size:7.7px;line-height:7.7px;color:#d5d5d5;font-weight:normal;font-family:'Liberation Mono',monospace;"><span style="color:#5db0d7">&lt;div </span><span style="color:#9bbbdc">class</span><span style="color:#5db0d7">=</span><span style="color:#f29766">"sections-menu hidden"</span><span style="color:#5db0d7">&gt;</span><span style="color:#e8eaed">…</span><span style="color:#5db0d7">&lt;/div&gt;</span></div>
<svg class="a" style="left:692.5px;top:195.6px;" width="5" height="6" viewBox="0 0 5 6"><path d="M0.5 0.3 L4.3 3 L0.5 5.7z" fill="#8a8a8a"/></svg>
<div class="a mo" style="left:698.80px;top:196.00px;font-size:7.7px;line-height:7.7px;color:#d5d5d5;font-weight:normal;font-family:'Liberation Mono',monospace;"><span style="color:#5db0d7">&lt;div </span><span style="color:#9bbbdc">class</span><span style="color:#5db0d7">=</span><span style="color:#f29766">"fav-button"</span><span style="color:#5db0d7">&gt;</span><span style="color:#e8eaed">…</span><span style="color:#5db0d7">&lt;/div&gt;</span></div>
<svg class="a" style="left:692.5px;top:206.0px;" width="5" height="6" viewBox="0 0 5 6"><path d="M0.5 0.3 L4.3 3 L0.5 5.7z" fill="#8a8a8a"/></svg>
<div class="a mo" style="left:698.80px;top:207.00px;font-size:7.7px;line-height:7.7px;color:#d5d5d5;font-weight:normal;font-family:'Liberation Mono',monospace;"><span style="color:#5db0d7">&lt;a </span><span style="color:#9bbbdc">class</span><span style="color:#5db0d7">=</span><span style="color:#f29766">"nav-button"</span> <span style="color:#9bbbdc">href</span><span style="color:#5db0d7">=</span><span style="color:#f29766">"<u style="color:#d5d5d5;text-decoration-color:#c0c0c0">/sections</u>"</span><span style="color:#5db0d7">&gt;</span><span style="color:#e8eaed">…</span><span style="color:#5db0d7">&lt;/a&gt;</span></div>
<svg class="a" style="left:692.5px;top:216.4px;" width="5" height="6" viewBox="0 0 5 6"><path d="M0.5 0.3 L4.3 3 L0.5 5.7z" fill="#8a8a8a"/></svg>
<div class="a mo" style="left:698.80px;top:217.00px;font-size:7.7px;line-height:7.7px;color:#d5d5d5;font-weight:normal;font-family:'Liberation Mono',monospace;"><span style="color:#5db0d7">&lt;main&gt;</span><span style="color:#e8eaed">…</span><span style="color:#5db0d7">&lt;/main&gt;</span></div>
<div class="a" style="left:765px;top:215.3px;width:24.5px;height:8.8px;border:0.9px solid #6f97b8;border-radius:5px;background:#2e3a44"></div>
<div class="a mo" style="left:769.50px;top:217.00px;font-size:7.2px;line-height:7.2px;color:#c9cdd2;font-weight:normal;font-family:'Liberation Mono',monospace;-webkit-text-stroke:0">grid</div>
<div class="a mo" style="left:794.00px;top:217.00px;font-size:7.7px;line-height:7.7px;color:#8a8a8a;font-weight:normal;font-family:'Liberation Mono',monospace;">== <i>$0</i></div>
<svg class="a" style="left:692.5px;top:226.8px;" width="5" height="6" viewBox="0 0 5 6"><path d="M0.5 0.3 L4.3 3 L0.5 5.7z" fill="#8a8a8a"/></svg>
<div class="a mo" style="left:698.80px;top:227.00px;font-size:7.7px;line-height:7.7px;color:#d5d5d5;font-weight:normal;font-family:'Liberation Mono',monospace;"><span style="color:#5db0d7">&lt;footer&gt;</span><span style="color:#e8eaed">…</span><span style="color:#5db0d7">&lt;/footer&gt;</span></div>
<div class="a" style="left:990.3px;top:88px;width:8.5px;height:145px;background:#2a2a2a;"></div>
<div class="a" style="left:990.3px;top:88.4px;width:8.5px;height:70px;background:#363636;border-left:0.6px solid #444"></div>
<div class="a" style="left:647px;top:233px;width:351px;height:16.3px;background:#232427;"></div>
<div class="a" style="left:647px;top:233px;width:351px;height:0.8px;background:#3d3d40;"></div>
<div class="a" style="left:652.50px;top:237.00px;font-size:8.3px;line-height:8.3px;color:#5eb4e6;font-weight:normal;font-family:'Liberation Sans',sans-serif;">html</div>
<div class="a" style="left:678.80px;top:237.00px;font-size:8.3px;line-height:8.3px;color:#5eb4e6;font-weight:normal;font-family:'Liberation Sans',sans-serif;">body</div>
<div class="a" style="left:707.00px;top:237.00px;font-size:8.3px;line-height:8.3px;color:#5eb4e6;font-weight:normal;font-family:'Liberation Sans',sans-serif;">div#___gatsby</div>
<div class="a" style="left:770.00px;top:237.00px;font-size:8.3px;line-height:8.3px;color:#5eb4e6;font-weight:normal;font-family:'Liberation Sans',sans-serif;letter-spacing:0.15px;">div#gatsby-focus-wrapper</div>
<div class="a" style="left:878.20px;top:237.00px;font-size:8.3px;line-height:8.3px;color:#5eb4e6;font-weight:normal;font-family:'Liberation Sans',sans-serif;letter-spacing:0.1px;">div.layout</div>
<div class="a" style="left:918px;top:234px;width:28.6px;height:15.2px;background:#303134;"></div>
<div class="a" style="left:923.00px;top:237.00px;font-size:8.3px;line-height:8.3px;color:#5eb4e6;font-weight:normal;font-family:'Liberation Sans',sans-serif;">main</div>
<div class="a" style="left:647px;top:249.3px;width:351px;height:19px;background:#292a2d;"></div>
<div class="a" style="left:647px;top:249px;width:351px;height:0.8px;background:#3d3d40;"></div>
<div class="a" style="left:647px;top:268.3px;width:351px;height:0.8px;background:#3d3d40;"></div>
<div class="a" style="left:648.2px;top:250.1px;width:35.7px;height:17.3px;background:#000;"></div>
<div class="a" style="left:654.60px;top:255.00px;font-size:8.3px;line-height:8.3px;color:#e8eaed;font-weight:normal;font-family:'Liberation Sans',sans-serif;">Styles</div>
<div class="a" style="left:690.60px;top:255.00px;font-size:8.3px;line-height:8.3px;color:#bdc1c6;font-weight:normal;font-family:'Liberation Sans',sans-serif;letter-spacing:0.1px;">Computed</div>
<div class="a" style="left:744.20px;top:255.00px;font-size:8.3px;line-height:8.3px;color:#bdc1c6;font-weight:normal;font-family:'Liberation Sans',sans-serif;">Layout</div>
<div class="a" style="left:783.30px;top:255.00px;font-size:8.3px;line-height:8.3px;color:#bdc1c6;font-weight:normal;font-family:'Liberation Sans',sans-serif;">Event Listeners</div>
<div class="a" style="left:853.50px;top:255.00px;font-size:8.3px;line-height:8.3px;color:#bdc1c6;font-weight:normal;font-family:'Liberation Sans',sans-serif;letter-spacing:0.07px;">DOM Breakpoints</div>
<div class="a" style="left:933.40px;top:255.00px;font-size:8.3px;line-height:8.3px;color:#bdc1c6;font-weight:normal;font-family:'Liberation Sans',sans-serif;">Properties</div>
<svg class="a" style="left:985px;top:255.5px;" width="8" height="7" viewBox="0 0 8 7"><path d="M0.7 0.7 L3.5 3.5 L0.7 6.3 M4.2 0.7 L7 3.5 L4.2 6.3" stroke="#bdc1c6" stroke-width="0.9" fill="none"/></svg>
<div class="a" style="left:647px;top:269.1px;width:343px;height:17.3px;background:#202124;"></div>
<div class="a" style="left:649px;top:271.4px;width:247px;height:12.8px;background:#2b2b2e;"></div>
<div class="a" style="left:652.70px;top:274.00px;font-size:8.3px;line-height:8.3px;color:#9aa0a6;font-weight:normal;font-family:'Liberation Sans',sans-serif;">Filter</div>
<div class="a mo" style="left:902.50px;top:276.00px;font-size:7.7px;line-height:7.7px;color:#e8eaed;font-weight:bold;font-family:'Liberation Mono',monospace;-webkit-text-stroke:0">:hov</div>
<div class="a mo" style="left:929.00px;top:276.00px;font-size:7.7px;line-height:7.7px;color:#e8eaed;font-weight:bold;font-family:'Liberation Mono',monospace;-webkit-text-stroke:0">.cls</div>
<svg class="a" style="left:955px;top:273px;" width="10" height="11" viewBox="0 0 10 11"><path d="M4 0.5 V7.5 M0.5 4 H7.5" stroke="#bdc1c6" stroke-width="0.9"/><path d="M9.5 8 V10.5 H7z" fill="#bdc1c6"/></svg>
<svg class="a" style="left:973px;top:273.5px;" width="11" height="9.5" viewBox="0 0 11 9.5"><rect x="0.5" y="0.5" width="10" height="8.5" fill="none" stroke="#bdc1c6" stroke-width="0.9"/><rect x="7" y="0.5" width="0.9" height="8.5" fill="#bdc1c6"/><path d="M5.5 2.5 L2.8 4.75 L5.5 7z" fill="#bdc1c6"/></svg>
<div class="a" style="left:647px;top:286px;width:343px;height:0.8px;background:#3d3d40;"></div>
<div class="a" style="left:990.3px;top:269px;width:8.5px;height:354px;background:#2a2a2a;"></div>
<div class="a" style="left:990.3px;top:268.8px;width:8.5px;height:172px;background:#363636;border-left:0.6px solid #444"></div>
<div class="a mo" style="left:651.00px;top:291.00px;font-size:7.7px;line-height:7.7px;color:#bdc1c6;font-weight:normal;font-family:'Liberation Mono',monospace;">element.style {</div>
<div class="a mo" style="left:651.00px;top:301.00px;font-size:7.7px;line-height:7.7px;color:#bdc1c6;font-weight:normal;font-family:'Liberation Mono',monospace;">}</div>
<div class="a" style="left:647px;top:311.6px;width:343px;height:0.8px;background:#3d3d40;"></div>
<div class="a mo" style="left:651.00px;top:316.00px;font-size:7.7px;line-height:7.7px;color:#e8eaed;font-weight:normal;font-family:'Liberation Mono',monospace;">main {</div>
<div class="a mo" style="left:923.82px;top:316.00px;font-size:7.7px;line-height:7.7px;color:#b5b8bd;font-weight:normal;font-family:'Liberation Mono',monospace;"><u style="text-decoration-color:#8a8d92">global.css:995</u></div>
<div class="a mo" style="left:663.30px;top:326.00px;font-size:7.7px;line-height:7.7px;color:#e8eaed;font-weight:normal;font-family:'Liberation Mono',monospace;"><span style="text-decoration:line-through;text-decoration-color:#8b8b8b"><span style="color:#8b8b8b">display</span><span style="color:#8b8b8b">: -ms-grid;</span></span></div>
<div class="a mo" style="left:663.30px;top:336.00px;font-size:7.7px;line-height:7.7px;color:#e8eaed;font-weight:normal;font-family:'Liberation Mono',monospace;"><span style="color:#35d4c7">display</span><span style="color:#e8eaed">: grid;</span></div>
<div class="a mo" style="left:663.30px;top:346.00px;font-size:7.7px;line-height:7.7px;color:#e8eaed;font-weight:normal;font-family:'Liberation Mono',monospace;"><span style="text-decoration:line-through;text-decoration-color:#8b8b8b"><span style="color:#8b8b8b">-ms-grid-columns</span><span style="color:#8b8b8b">: (1fr)[16];</span></span></div>
<div class="a mo" style="left:663.30px;top:356.00px;font-size:7.7px;line-height:7.7px;color:#e8eaed;font-weight:normal;font-family:'Liberation Mono',monospace;"><span style="color:#35d4c7">grid-template-columns</span><span style="color:#e8eaed">: repeat(16, 1fr);</span></div>
<div class="a mo" style="left:651.00px;top:365.00px;font-size:7.7px;line-height:7.7px;color:#bdc1c6;font-weight:normal;font-family:'Liberation Mono',monospace;">}</div>
<div class="a" style="left:647px;top:375.0px;width:343px;height:0.8px;background:#3d3d40;"></div>
<div class="a mo" style="left:651.00px;top:379.00px;font-size:7.7px;line-height:7.7px;color:#e8eaed;font-weight:normal;font-family:'Liberation Mono',monospace;"><span style="color:#a8a8a8">footer, header, nav, section, </span><span style="color:#e8eaed">main</span><span style="color:#a8a8a8"> {</span></div>
<div class="a mo" style="left:923.82px;top:379.00px;font-size:7.7px;line-height:7.7px;color:#b5b8bd;font-weight:normal;font-family:'Liberation Mono',monospace;"><u style="text-decoration-color:#8a8d92">_reset.sass:24</u></div>
<div class="a mo" style="left:663.30px;top:390.00px;font-size:7.7px;line-height:7.7px;color:#e8eaed;font-weight:normal;font-family:'Liberation Mono',monospace;"><span style="text-decoration:line-through;text-decoration-color:#8b8b8b"><span style="color:#35d4c7">display</span><span style="color:#e8eaed">: block;</span></span></div>
<div class="a mo" style="left:651.00px;top:400.00px;font-size:7.7px;line-height:7.7px;color:#bdc1c6;font-weight:normal;font-family:'Liberation Mono',monospace;">}</div>
<div class="a" style="left:647px;top:410.0px;width:343px;height:0.8px;background:#3d3d40;"></div>
<div class="a mo" style="left:651.00px;top:414.00px;font-size:7.7px;line-height:7.7px;color:#a8a8a8;font-weight:normal;font-family:'Liberation Mono',monospace;">html, body, div, span, object, iframe, figure, h1, h2, h3,</div>
<div class="a mo" style="left:651.00px;top:423.00px;font-size:7.7px;line-height:7.7px;color:#a8a8a8;font-weight:normal;font-family:'Liberation Mono',monospace;">h4, h5, h6, p, blockquote, pre, a, code, em, img, small,</div>
<div class="a mo" style="left:651.00px;top:432.00px;font-size:7.7px;line-height:7.7px;color:#a8a8a8;font-weight:normal;font-family:'Liberation Mono',monospace;">strike, strong, sub, sup, tt, b, u, i, ol, fieldset, form, label, table,</div>
<div class="a mo" style="left:651.00px;top:441.00px;font-size:7.7px;line-height:7.7px;color:#a8a8a8;font-weight:normal;font-family:'Liberation Mono',monospace;">caption, tbody, tfoot, thead, tr, th, td, <span style="color:#e8eaed">main</span>, canvas, embed, footer,</div>
<div class="a mo" style="left:651.00px;top:450.00px;font-size:7.7px;line-height:7.7px;color:#a8a8a8;font-weight:normal;font-family:'Liberation Mono',monospace;">header, nav, section, video {</div>
<div class="a mo" style="left:933.06px;top:414.00px;font-size:7.7px;line-height:7.7px;color:#b5b8bd;font-weight:normal;font-family:'Liberation Mono',monospace;"><u style="text-decoration-color:#8a8d92">global.css:7</u></div>
<div class="a mo" style="left:663.30px;top:461.00px;font-size:7.7px;line-height:7.7px;color:#e8eaed;font-weight:normal;font-family:'Liberation Mono',monospace;"><span style="color:#35d4c7">margin</span><span style="color:#e8eaed">:</span></div>
<svg class="a" style="left:698.34px;top:460.9px;" width="5" height="6" viewBox="0 0 5 6"><path d="M0.5 0.5 L4 3 L0.5 5.5z" fill="#9aa0a6"/></svg>
<div class="a mo" style="left:705.14px;top:461.00px;font-size:7.7px;line-height:7.7px;color:#e8eaed;font-weight:normal;font-family:'Liberation Mono',monospace;">0;</div>
<div class="a mo" style="left:663.30px;top:471.00px;font-size:7.7px;line-height:7.7px;color:#e8eaed;font-weight:normal;font-family:'Liberation Mono',monospace;"><span style="color:#35d4c7">padding</span><span style="color:#e8eaed">:</span></div>
<svg class="a" style="left:702.96px;top:470.59999999999997px;" width="5" height="6" viewBox="0 0 5 6"><path d="M0.5 0.5 L4 3 L0.5 5.5z" fill="#9aa0a6"/></svg>
<div class="a mo" style="left:709.76px;top:471.00px;font-size:7.7px;line-height:7.7px;color:#e8eaed;font-weight:normal;font-family:'Liberation Mono',monospace;">0;</div>
<div class="a mo" style="left:663.30px;top:480.00px;font-size:7.7px;line-height:7.7px;color:#e8eaed;font-weight:normal;font-family:'Liberation Mono',monospace;"><span style="color:#35d4c7">border</span><span style="color:#e8eaed">:</span></div>
<svg class="a" style="left:698.34px;top:480.09999999999997px;" width="5" height="6" viewBox="0 0 5 6"><path d="M0.5 0.5 L4 3 L0.5 5.5z" fill="#9aa0a6"/></svg>
<div class="a mo" style="left:705.14px;top:480.00px;font-size:7.7px;line-height:7.7px;color:#e8eaed;font-weight:normal;font-family:'Liberation Mono',monospace;">0;</div>
<div class="a mo" style="left:663.30px;top:490.00px;font-size:7.7px;line-height:7.7px;color:#e8eaed;font-weight:normal;font-family:'Liberation Mono',monospace;"><span style="color:#35d4c7">vertical-align</span><span style="color:#e8eaed">: baseline;</span></div>
<div class="a mo" style="left:663.30px;top:500.00px;font-size:7.7px;line-height:7.7px;color:#e8eaed;font-weight:normal;font-family:'Liberation Mono',monospace;"><span style="color:#35d4c7">text-rendering</span><span style="color:#e8eaed">: optimizeLegibility;</span></div>
<div class="a mo" style="left:663.30px;top:509.00px;font-size:7.7px;line-height:7.7px;color:#e8eaed;font-weight:normal;font-family:'Liberation Mono',monospace;"><span style="color:#35d4c7">-webkit-font-smoothing</span><span style="color:#e8eaed">: antialiased;</span></div>
<div class="a mo" style="left:663.30px;top:519.00px;font-size:7.7px;line-height:7.7px;color:#e8eaed;font-weight:normal;font-family:'Liberation Mono',monospace;"><span style="text-decoration:line-through;text-decoration-color:#8b8b8b"><span style="color:#35d4c7">-webkit-text-size-adjust</span><span style="color:#e8eaed">: none;</span></span></div>
<div class="a mo" style="left:663.30px;top:529.00px;font-size:7.7px;line-height:7.7px;color:#e8eaed;font-weight:normal;font-family:'Liberation Mono',monospace;"><span style="text-decoration:line-through;text-decoration-color:#8b8b8b"><span style="color:#8b8b8b">-moz-text-size-adjust</span><span style="color:#8b8b8b">: none;</span></span></div>
<div class="a mo" style="left:663.30px;top:539.00px;font-size:7.7px;line-height:7.7px;color:#e8eaed;font-weight:normal;font-family:'Liberation Mono',monospace;"><span style="color:#35d4c7">text-size-adjust</span><span style="color:#e8eaed">: none;</span></div>
<div class="a mo" style="left:663.30px;top:548.00px;font-size:7.7px;line-height:7.7px;color:#e8eaed;font-weight:normal;font-family:'Liberation Mono',monospace;"><span style="text-decoration:line-through;text-decoration-color:#8b8b8b"><span style="color:#8b8b8b">-ms-overflow-style</span><span style="color:#8b8b8b">: none;</span></span></div>
<div class="a mo" style="left:663.30px;top:558.00px;font-size:7.7px;line-height:7.7px;color:#e8eaed;font-weight:normal;font-family:'Liberation Mono',monospace;"><span style="text-decoration:line-through;text-decoration-color:#8b8b8b"><span style="color:#8b8b8b">scrollbar-width</span><span style="color:#8b8b8b">: none !important;</span></span></div>
<div class="a mo" style="left:663.30px;top:568.00px;font-size:7.7px;line-height:7.7px;color:#e8eaed;font-weight:normal;font-family:'Liberation Mono',monospace;"><span style="text-decoration:line-through;text-decoration-color:#8b8b8b"><span style="color:#8b8b8b">scrollbar-width</span><span style="color:#8b8b8b">: none;</span></span></div>
<div class="a mo" style="left:651.00px;top:577.00px;font-size:7.7px;line-height:7.7px;color:#bdc1c6;font-weight:normal;font-family:'Liberation Mono',monospace;">}</div>
<div class="a" style="left:647px;top:587.4px;width:343px;height:0.8px;background:#3d3d40;"></div>
<div class="a mo" style="left:651.00px;top:592.00px;font-size:7.7px;line-height:7.7px;color:#e8eaed;font-weight:normal;font-family:'Liberation Mono',monospace;"><span style="color:#e8eaed">*</span><span style="color:#a8a8a8">, </span><span style="color:#a8a8a8">*:before, *:after {</span></div>
<div class="a mo" style="left:928.44px;top:592.00px;font-size:7.7px;line-height:7.7px;color:#b5b8bd;font-weight:normal;font-family:'Liberation Mono',monospace;"><u style="text-decoration-color:#8a8d92">_reset.sass:1</u></div>
<div class="a mo" style="left:663.30px;top:602.00px;font-size:7.7px;line-height:7.7px;color:#e8eaed;font-weight:normal;font-family:'Liberation Mono',monospace;"><span style="color:#35d4c7">box-sizing</span><span style="color:#e8eaed">: border-box;</span></div>
<div class="a mo" style="left:651.00px;top:612.00px;font-size:7.7px;line-height:7.7px;color:#bdc1c6;font-weight:normal;font-family:'Liberation Mono',monospace;">}</div>
<div class="a" style="left:647px;top:622.5px;width:343px;height:0.8px;background:#3d3d40;"></div>
</div></body></html>
